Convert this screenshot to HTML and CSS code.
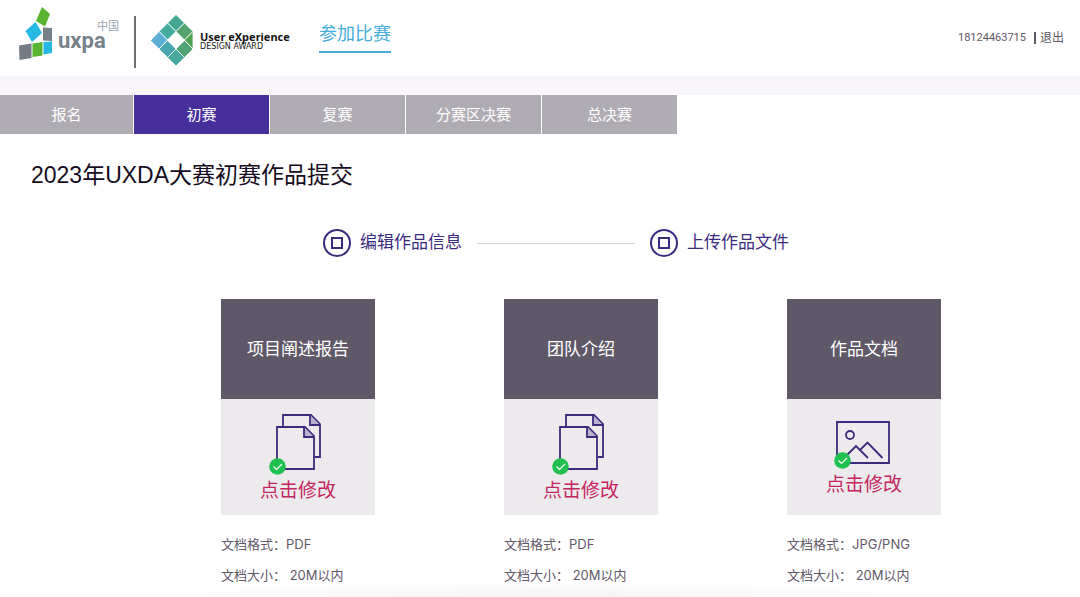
FILE: index.html
```html
<!DOCTYPE html>
<html lang="zh-CN">
<head>
<meta charset="utf-8">
<meta name="viewport" content="width=device-width, initial-scale=1">
<title>2023年UXDA大赛初赛作品提交</title>
<link rel="stylesheet" href="styles.css">
</head>
<body>
<svg class="sprite" aria-hidden="true">
  <symbol id="docs" viewBox="0 0 53 62">
    <g fill="none" stroke="#3b2b7e" stroke-width="1.800">
      <path d="M14 13V2H42L51 11V44H46"/>
      <path d="M41 2V12H51" fill="#b9b3d0"/>
      <path d="M8 14H36L45 23V56H8Z"/>
      <path d="M35 14V24H45" fill="#b9b3d0"/>
    </g>
    <circle cx="8.500" cy="53.500" r="8.300" fill="#1fc04f"/>
    <path d="M4.500 53.500L7.500 56.500L13 51" fill="none" stroke="#fff" stroke-width="1.200"/>
  </symbol>
  <symbol id="picture" viewBox="-3 0 60 49">
    <g fill="none" stroke="#3b2b7e" stroke-width="1.800">
      <path d="M3 2H55V43H3Z"/>
      <circle cx="16" cy="15" r="4"/>
      <path d="M13 35L22 26L34 38M26 30L33.500 22.500L48.500 38"/>
    </g>
    <circle cx="8.500" cy="40.500" r="8.300" fill="#1fc04f"/>
    <path d="M4.500 40.500L7.500 43.500L13 38" fill="none" stroke="#fff" stroke-width="1.200"/>
  </symbol>
</svg>

<header class="header">
  <a class="brand" href="#" aria-label="UXPA中国 User eXperience Design Award">
    <svg class="logo-uxpa" width="102" height="56" viewBox="18 6 102 56">
      <path fill="#58b431" d="M42 7L50 14L45 26.500L36 21Z"/>
      <path fill="#25b8e2" d="M35.500 22L42 33L32 42L25.500 31Z"/>
      <path fill="#778189" d="M43 27.500L52 28V41L43 40.500Z"/>
      <path fill="#747b83" d="M19 45.500L31.500 43.500V58L19.500 60Z"/>
      <path fill="#58b431" d="M32.500 43.500L42.500 42V55.500L32.500 57Z"/>
      <path fill="#25b8e2" d="M43.500 42L52 41.500V53L43.500 54.500Z"/>
      <text class="uxpa-word" x="58" y="48">uxpa</text>
      <text class="uxpa-region" x="97" y="30">中国</text>
    </svg>
    <span class="brand-rule"></span>
    <svg class="logo-award" width="140" height="54" viewBox="151 14 140 54">
      <g stroke="#fff" stroke-width=".800">
        <path fill="#43a893" d="M177 14.500L185.500 23L177 31.500L168.500 23Z"/>
        <path fill="#46ab9f" d="M168.500 23L177 31.500L168.500 40L160 31.500Z"/>
        <path fill="#53a36f" d="M185.500 23L194 31.500L185.500 40L177 31.500Z"/>
        <path fill="#5bafd5" d="M160 31.500L168.500 40L160 49L151.500 40.500Z"/>
        <path fill="#4fa34f" d="M194 31.500V49L185.500 40Z"/>
        <path fill="#48a8b0" d="M168.500 40.500L177 49L168.500 57.500L160 49Z"/>
        <path fill="#50a473" d="M185.500 40.500L194 49L185.500 57.500L177 49Z"/>
        <path fill="#45aa9d" d="M177 49L185.500 57.500L177 66L168.500 57.500Z"/>
      </g>
      <text class="award-name" x="201" y="41">User eXperience</text>
      <text class="award-sub" x="201" y="49">DESIGN AWARD</text>
    </svg>
  </a>
  <nav class="main-nav"><a href="#">参加比赛</a></nav>
  <div class="account">
    <span class="phone">18124463715</span>
    <a class="logout" href="#">退出</a>
  </div>
</header>
<div class="band"></div>

<nav class="stages">
  <a href="#">报名</a>
  <a class="active" href="#" aria-current="page">初赛</a>
  <a href="#">复赛</a>
  <a href="#">分赛区决赛</a>
  <a href="#">总决赛</a>
</nav>

<main>
  <h1>2023年UXDA大赛初赛作品提交</h1>
  <div class="steps">
    <a class="step" href="#"><span class="step-mark"></span>编辑作品信息</a>
    <span class="step-line"></span>
    <a class="step" href="#"><span class="step-mark"></span>上传作品文件</a>
  </div>

  <div class="cards">
    <section class="card">
      <h2>项目阐述报告</h2>
      <button class="upload" type="button">
        <svg width="53" height="62"><use href="#docs"/></svg>
        <span>点击修改</span>
      </button>
      <p>文档格式：PDF</p>
      <p>文档大小： 20M以内</p>
    </section>
    <section class="card">
      <h2>团队介绍</h2>
      <button class="upload" type="button">
        <svg width="53" height="62"><use href="#docs"/></svg>
        <span>点击修改</span>
      </button>
      <p>文档格式：PDF</p>
      <p>文档大小： 20M以内</p>
    </section>
    <section class="card">
      <h2>作品文档</h2>
      <button class="upload" type="button">
        <svg width="60" height="49"><use href="#picture"/></svg>
        <span>点击修改</span>
      </button>
      <p>文档格式：JPG/PNG</p>
      <p>文档大小： 20M以内</p>
    </section>
  </div>
</main>
<div class="footer-shade"></div>
</body>
</html>
```
FILE: styles.css
```css
* {
  box-sizing: border-box;
}

body {
  margin: 0;
  min-height: 100vh;
  display: flex;
  flex-direction: column;
  overflow: hidden;
  background: #fff;
  color: #5f5868;
  font-family: "Liberation Sans", "Noto Sans CJK SC", sans-serif;
}

a {
  color: inherit;
  text-decoration: none;
}

h1,
h2,
p {
  margin: 0;
  font-weight: 400;
}

.sprite {
  position: absolute;
  width: 0;
  height: 0;
}

.header {
  display: flex;
  align-items: center;
  height: 76px;
  padding: 0 16px 0 18px;
}

.brand {
  display: flex;
  align-items: center;
  gap: 14px;
}

.logo-uxpa {
  margin-bottom: 8px;
}

.brand-rule {
  width: 2px;
  height: 52px;
  margin-top: 8px;
  background: #707070;
}

.logo-award {
  margin-top: 6px;
}

.uxpa-word {
  font: 700 22px Roboto, sans-serif;
  fill: #78828b;
}

.uxpa-region {
  font-size: 11px;
  fill: #9aa5ae;
}

.award-name {
  font: 700 11px "Noto Sans", sans-serif;
  fill: #151515;
}

.award-sub {
  font: 8px "DejaVu Sans", sans-serif;
  fill: #151515;
}

.main-nav {
  margin: 0 0 4px 29px;
}

.main-nav a {
  display: block;
  padding-bottom: 2px;
  border-bottom: 2px solid #47add9;
  color: #47add9;
  font-size: 18px;
  line-height: 30px;
}

.account {
  display: flex;
  align-items: center;
  margin-left: auto;
  font-size: 12px;
  line-height: 12px;
}

.phone {
  font-family: Roboto, sans-serif;
  font-size: 11px;
}

.logout {
  margin-left: 8px;
  padding-left: 4px;
  border-left: 2px solid #5f5868;
}

.band {
  height: 19px;
  background: #f8f6fa;
}

.stages {
  display: flex;
  gap: 1px;
}

.stages a {
  width: 135px;
  background: #afacb3;
  color: #fff;
  font-size: 15px;
  line-height: 39px;
  text-align: center;
}

.stages a:first-child {
  width: 133px;
}

.stages .active {
  background: #472f9b;
}

h1 {
  padding: 24px 31px 0;
  color: #160c22;
  font-size: 23px;
  line-height: 34px;
}

.steps {
  display: flex;
  align-items: center;
  justify-content: center;
  gap: 15px;
  margin-top: 36px;
  padding-left: 32px;
}

.step {
  display: flex;
  align-items: center;
  gap: 9px;
  color: #3b2b7e;
  font-size: 17px;
  line-height: 30px;
}

.step-mark {
  display: grid;
  place-items: center;
  width: 28px;
  height: 28px;
  border: 2px solid #3b2b7e;
  border-radius: 50%;
}

.step-mark::before {
  content: "";
  width: 8px;
  height: 8px;
  border: 2px solid #3b2b7e;
}

.step-line {
  width: 158px;
  height: 1px;
  background: #d5d3d9;
}

.cards {
  display: flex;
  justify-content: space-between;
  margin-top: 41px;
  padding: 0 139px 0 221px;
}

.card {
  width: 154px;
}

.card h2 {
  padding-top: 2px;
  background: #5f5868;
  color: #fff;
  font-size: 17px;
  line-height: 98px;
  text-align: center;
}

.upload {
  display: flex;
  flex-direction: column;
  align-items: center;
  justify-content: center;
  gap: 2px;
  width: 100%;
  height: 116px;
  margin-bottom: 14px;
  padding: 4px 0 0;
  border: 0;
  background: #eceaed;
  color: #c5255f;
  font-family: inherit;
  font-size: 19px;
  line-height: 28px;
}

.upload svg {
  margin-right: 6px;
}

.card p {
  font-family: Inter, "Noto Sans CJK SC", sans-serif;
  font-size: 13px;
  line-height: 31px;
  white-space: nowrap;
}

.footer-shade {
  position: fixed;
  bottom: 0;
  left: 12%;
  right: 12%;
  height: 14px;
  background: radial-gradient(50% 100% at 50% 100%, #f3f3f3, #f3f3f300);
}
```
